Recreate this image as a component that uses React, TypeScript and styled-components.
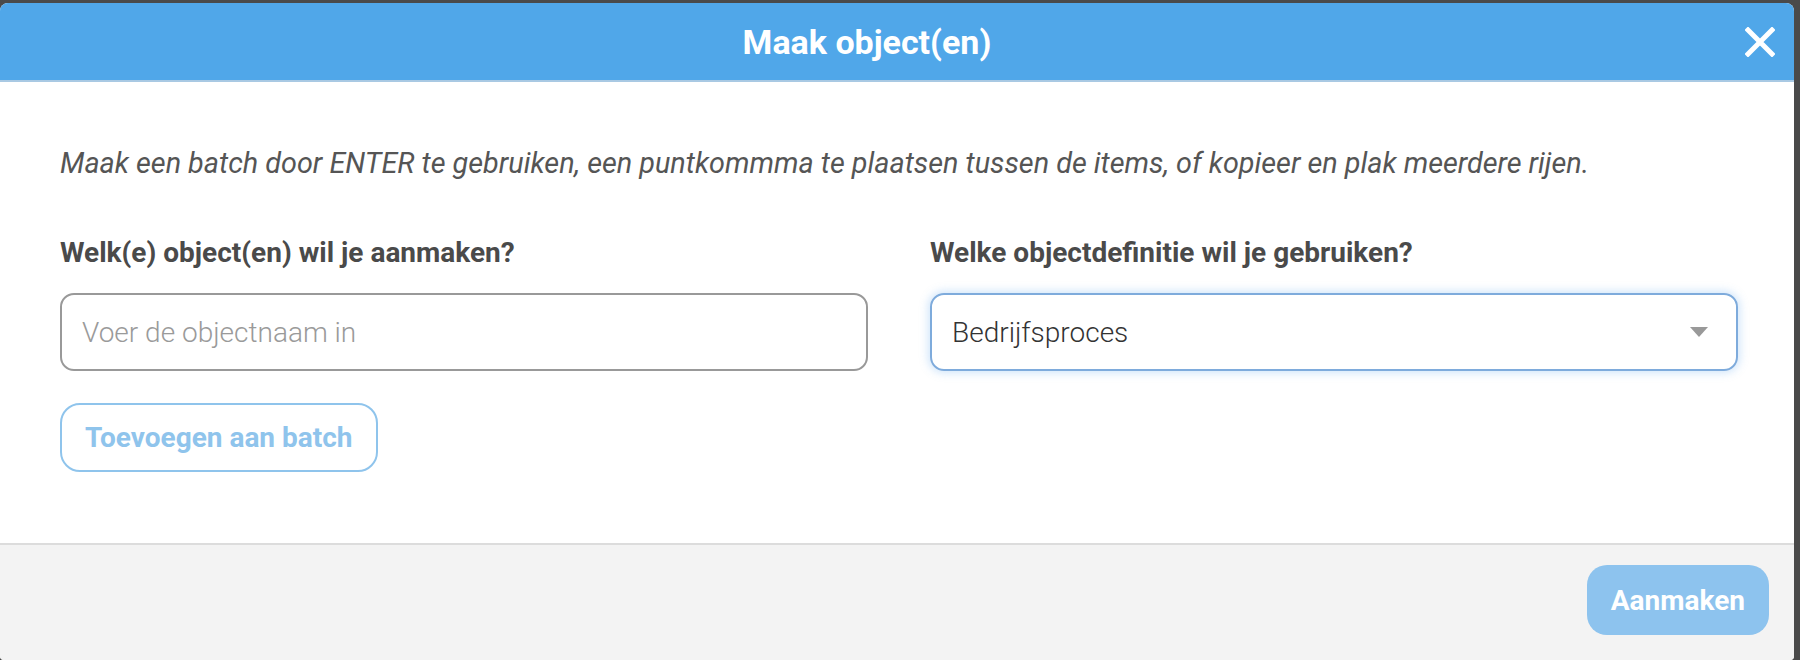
import styled, { createGlobalStyle } from "styled-components";

const GlobalStyle = createGlobalStyle`
	html, body {
		margin: 0;
		padding: 0;
		background-color: #4a4a4a;
		font-family: Roboto, "Liberation Sans", sans-serif;
	}
`;

const Modal = styled.div`
	width: 1794px;
	height: 657px;
	margin-top: 3px;
	background-color: #ffffff;
	border-radius: 8px 8px 4px 4px;
	overflow: hidden;
	display: flex;
	flex-direction: column;
`;

const Header = styled.header`
	position: relative;
	height: 77px;
	flex-shrink: 0;
	background-color: #50a7e9;
	border-bottom: 2px solid #a9c9e3;
	display: flex;
	align-items: center;
	justify-content: center;
`;

const Title = styled.h1`
	margin: 0 60px 0 0;
	font-size: 34px;
	font-weight: 700;
	color: #ffffff;
`;

const CloseButton = styled.button`
	position: absolute;
	right: 17px;
	top: 22px;
	width: 34px;
	height: 34px;
	padding: 0;
	border: none;
	background: none;
	cursor: pointer;
	display: flex;
	align-items: center;
	justify-content: center;
`;

const Body = styled.div`
	flex-grow: 1;
	padding: 64px 56px 0 60px;
`;

const Hint = styled.p`
	margin: 0 0 57px;
	font-size: 28.8px;
	font-style: italic;
	color: #555555;
	line-height: 34px;
`;

const Columns = styled.div`
	display: grid;
	grid-template-columns: 808px 808px;
	column-gap: 62px;
`;

const Field = styled.div`
	display: flex;
	flex-direction: column;
	align-items: flex-start;
`;

const Label = styled.label`
	font-size: 28px;
	font-weight: 700;
	color: #4a4a4a;
	line-height: 32px;
	margin-bottom: 24px;
`;

const TextInput = styled.input`
	box-sizing: border-box;
	width: 100%;
	height: 78px;
	padding: 0 20px;
	border: 2px solid #999999;
	border-radius: 14px;
	font-family: inherit;
	font-size: 28px;
	font-weight: 300;
	color: #333333;
	outline: none;

	&::placeholder {
		color: #9a9a9a;
	}
`;

const Select = styled.div`
	box-sizing: border-box;
	width: 100%;
	height: 78px;
	padding: 0 28px 0 20px;
	border: 2px solid #7eabdc;
	border-radius: 14px;
	box-shadow: 0 0 8px 2px rgba(120, 180, 240, 0.35);
	display: flex;
	align-items: center;
	justify-content: space-between;
	font-size: 28px;
	font-weight: 300;
	color: #333333;
`;

const Caret = styled.span`
	width: 0;
	height: 0;
	border-left: 9px solid transparent;
	border-right: 9px solid transparent;
	border-top: 10px solid #999999;
`;

const OutlineButton = styled.button`
	box-sizing: border-box;
	margin-top: 32px;
	height: 69px;
	padding: 0 23px;
	border: 2px solid #8fc4ec;
	border-radius: 20px;
	background-color: #ffffff;
	color: #8fc4ec;
	font-family: inherit;
	font-size: 28px;
	font-weight: 700;
`;

const Footer = styled.footer`
	height: 117px;
	flex-shrink: 0;
	background-color: #f3f3f3;
	border-top: 2px solid #dcdcdc;
	box-sizing: border-box;
	display: flex;
	justify-content: flex-end;
	align-items: flex-start;
	padding: 20px 25px 0 0;
`;

const PrimaryButton = styled.button`
	height: 70px;
	padding: 0 24px;
	border: none;
	border-radius: 20px;
	background-color: #8dc3ee;
	color: #ffffff;
	font-family: inherit;
	font-size: 28px;
	font-weight: 700;
`;

const App = () => {
	return (
		<>
			<GlobalStyle />
			<Modal>
				<Header>
					<Title>Maak object(en)</Title>
					<CloseButton aria-label="Sluiten">
						<svg width="30" height="30" viewBox="0 0 30 30">
							<path d="M3 3 L27 27 M27 3 L3 27" stroke="#ffffff" strokeWidth="5" strokeLinecap="square" />
						</svg>
					</CloseButton>
				</Header>
				<Body>
					<Hint>
						Maak een batch door ENTER te gebruiken, een puntkommma te plaatsen tussen de items, of kopieer en plak
						meerdere rijen.
					</Hint>
					<Columns>
						<Field>
							<Label>Welk(e) object(en) wil je aanmaken?</Label>
							<TextInput placeholder="Voer de objectnaam in" />
							<OutlineButton>Toevoegen aan batch</OutlineButton>
						</Field>
						<Field>
							<Label>Welke objectdefinitie wil je gebruiken?</Label>
							<Select>
								<span>Bedrijfsproces</span>
								<Caret />
							</Select>
						</Field>
					</Columns>
				</Body>
				<Footer>
					<PrimaryButton>Aanmaken</PrimaryButton>
				</Footer>
			</Modal>
		</>
	);
};

export default App;
